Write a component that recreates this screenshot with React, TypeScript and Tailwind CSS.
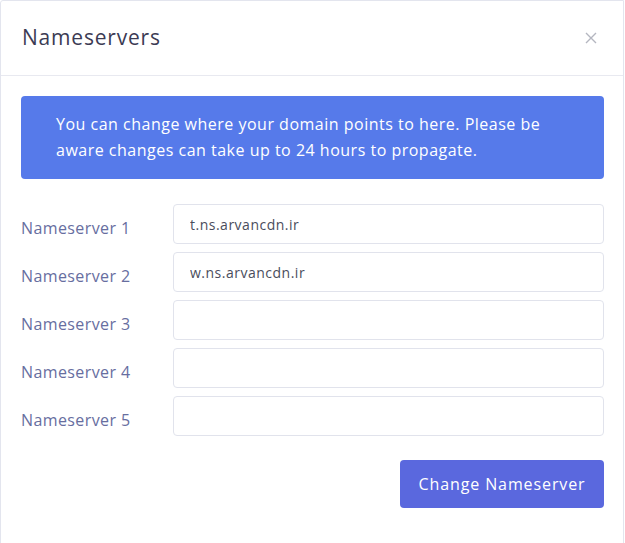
import React from 'react';

const servers = ['t.ns.arvancdn.ir', 'w.ns.arvancdn.ir', '', '', ''];

export default function App() {
  return (
    <div className="w-[625px] h-[543px] bg-white overflow-hidden" style={{ fontFamily: '"Open Sans", "Noto Sans", sans-serif' }}>
      <div className="w-[624px] min-h-[560px] border border-[#e3e5ee] rounded-tl-[3px] bg-white">
        {/* header */}
        <div className="h-[75px] flex items-center justify-between pl-[21px] pr-[26px] border-b border-[#e8e9f0]">
          <h2 className="text-[21px] font-medium text-[#3c3b54] tracking-[0.8px]">Nameservers</h2>
          <svg width="12" height="12" viewBox="0 0 12 12" className="text-[#b4b6c0]">
            <path d="M1 1L11 11M11 1L1 11" stroke="currentColor" strokeWidth="1.4" />
          </svg>
        </div>

        <div className="pt-[20px] pl-[20px] pr-[19px]">
          <div className="bg-[#567aea] rounded-[4px] pl-[35px] pr-[48px] pt-[15px] pb-[16px] text-white text-[16px] leading-[26px] tracking-[0.5px]">
            You can change where your domain points to here. Please be aware changes can take up to 24 hours to propagate.
          </div>

          <div className="mt-[25px] flex flex-col gap-[8px]">
            {servers.map((v, i) => (
              <div key={i} className="flex items-center">
                <label className="w-[152px] text-[16px] text-[#676e9f] tracking-[0.4px] pt-[8px]">Nameserver {i + 1}</label>
                <input
                  defaultValue={v}
                  className="flex-1 h-[40px] border border-[#e1e3ec] rounded-[4px] px-[16px] text-[14px] tracking-[0.5px] text-[#4a4d5c] outline-none"
                />
              </div>
            ))}
          </div>

          <div className="flex justify-end mt-[24px]">
            <button className="h-[48px] w-[204px] bg-[#5a68de] rounded-[4px] text-white text-[16px] tracking-[0.9px]">
              Change Nameserver
            </button>
          </div>
        </div>
      </div>
    </div>
  );
}
